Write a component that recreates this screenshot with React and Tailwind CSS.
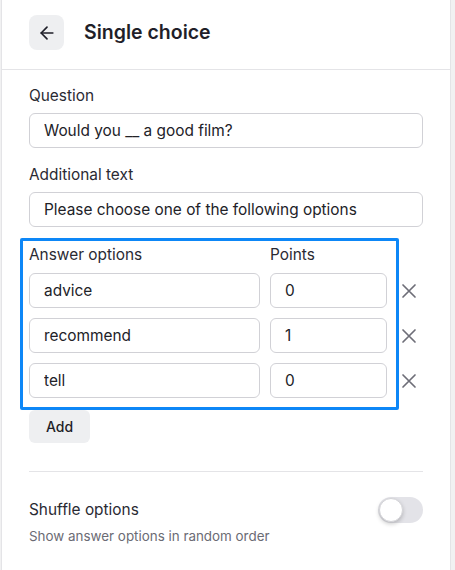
import React, { useState } from 'react';
import { ArrowLeft } from 'lucide-react';

const options = [
  { text: 'advice', points: '0' },
  { text: 'recommend', points: '1' },
  { text: 'tell', points: '0' },
];

function Field({ value, className = '' }) {
  return (
    <input
      defaultValue={value}
      className={`h-[35px] w-full rounded-md border border-[#d1d1d6] bg-white px-[14px] text-[15.4px] text-[#222228] outline-none ${className}`}
    />
  );
}

function Cross() {
  return (
    <svg width="16" height="16" viewBox="0 0 16 16" fill="none" stroke="#6e6e78" strokeWidth="1.7" strokeLinecap="round">
      <path d="M2 2l12 12M14 2L2 14" />
    </svg>
  );
}

export default function App() {
  const [shuffle, setShuffle] = useState(false);

  return (
    <div className="flex min-h-[570px] bg-[#f1f1f2]" style={{ fontFamily: 'Inter, "Noto Sans", sans-serif' }}>
      <div className="ml-px w-[450px] min-h-[570px] border-x border-[#e4e4e7] bg-white">
        <div className="flex h-[70px] items-start gap-[20px] border-b border-[#e4e4e7] px-[27px] pt-[15px]">
          <button className="flex h-[35px] w-[35px] items-center justify-center rounded-lg bg-[#eeeff1]">
            <ArrowLeft size={20} strokeWidth={2} color="#1f1f29" />
          </button>
          <h1 className="text-[19.5px] font-semibold leading-[35px] text-[#1f1f29]">Single choice</h1>
        </div>

        <div className="px-[27px] pt-[14px]">
          <label className="block text-[15.4px] leading-6 text-[#2a2a33]">Question</label>
          <Field value="Would you __ a good film?" className="mt-[5px]" />

          <label className="mt-[15px] block text-[15.4px] leading-6 text-[#2a2a33]">Additional text</label>
          <Field value="Please choose one of the following options" className="mt-[5px]" />

          <div className="relative mt-[16px]">
            <div className="pointer-events-none absolute left-[-9px] top-[-5px] bottom-[-12px] w-[379px] rounded-[2px] border-[3px] border-[#0d87f7]" />
            <div className="grid grid-cols-[231px_117px_1fr] gap-x-[10px]">
              <span className="text-[15.4px] leading-6 text-[#2a2a33]">Answer options</span>
              <span className="text-[15.4px] leading-6 text-[#2a2a33]">Points</span>
              <span />
            </div>
            <div className="mt-[6px] flex flex-col gap-[10px]">
              {options.map((o) => (
                <div key={o.text} className="grid grid-cols-[231px_117px_1fr] items-center gap-x-[10px]">
                  <Field value={o.text} />
                  <Field value={o.points} />
                  <button className="flex justify-end pr-[6px]">
                    <Cross />
                  </button>
                </div>
              ))}
            </div>
          </div>

          <button className="mt-[12px] h-[33px] w-[61px] rounded-md bg-[#eeeff1] text-[14px] font-medium text-[#1f1f29]">
            Add
          </button>

          <div className="mt-[28px] h-px bg-[#e4e4e7]" />

          <div className="mt-[26px] flex items-start justify-between">
            <div>
              <div className="text-[15.4px] leading-6 text-[#2a2a33]">Shuffle options</div>
              <div className="mt-[4px] text-[13.4px] leading-5 text-[#6b6b74]">Show answer options in random order</div>
            </div>
            <button
              onClick={() => setShuffle(!shuffle)}
              className={`-mt-px flex h-[26px] w-[45px] items-center rounded-full p-px ${shuffle ? 'bg-[#0d87f7] justify-end' : 'bg-[#e3e3e8] justify-start'}`}
            >
              <span className="h-[24px] w-[24px] rounded-full border border-[#d4d4d8] bg-white shadow-[0_2px_4px_rgba(0,0,0,0.2)]" />
            </button>
          </div>
        </div>
      </div>
    </div>
  );
}
